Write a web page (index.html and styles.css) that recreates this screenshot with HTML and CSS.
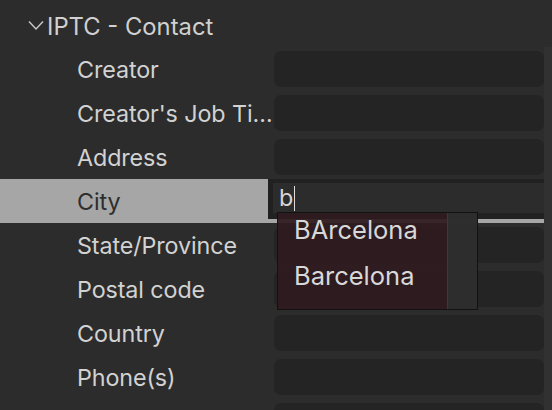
FILE: index.html
```html
<!DOCTYPE html>
<html lang="en">
<head>
  <meta charset="UTF-8">
  <title>IPTC - Contact</title>
  <link rel="stylesheet" href="styles.css">
</head>
<body>

  <div class="panel">
    <div class="section-head">
      <svg class="chevron" width="18" height="12" viewBox="0 0 18 12">
        <polyline points="2,2.5 9,10 16,2.5" fill="none" stroke="#c9c9c9" stroke-width="1.4"/>
      </svg>
      <span>IPTC - Contact</span>
    </div>

    <div class="body">
      <div class="rows">
        <div class="row"><div class="label">Creator</div><div class="field"></div></div>
        <div class="row"><div class="label">Creator's Job Title</div><div class="field"></div></div>
        <div class="row"><div class="label">Address</div><div class="field"></div></div>

        <div class="row editing">
          <div class="label">City</div>
          <div class="editor">
            <div class="editor-input">b<span class="caret"></span></div>
          </div>
          <!-- autocomplete popup -->
          <div class="completions">
            <ul>
              <li>BArcelona</li>
              <li>Barcelona</li>
            </ul>
            <div class="completions-scroll"></div>
          </div>
        </div>

        <div class="row"><div class="label">State/Province</div><div class="field"></div></div>
        <div class="row"><div class="label">Postal code</div><div class="field"></div></div>
        <div class="row"><div class="label">Country</div><div class="field"></div></div>
        <div class="row"><div class="label">Phone(s)</div><div class="field"></div></div>
        <div class="row"><div class="label"></div><div class="field"></div></div>
      </div>
      <div class="scroll-track"></div>
    </div>
  </div>

</body>
</html>
```

FILE: styles.css
```css
html, body {
  margin: 0;
  height: 100%;
  overflow: hidden;
}

body {
  background: #2c2c2c;
  font-family: Inter, "Noto Sans", sans-serif;
  font-size: 23.3px;
  color: #d2d2d2;
}

.panel {
  height: 410px;
  overflow: hidden;
}

/* Section header */
.section-head {
  height: 47px;
  box-sizing: border-box;
  display: flex;
  align-items: center;
  padding: 6px 0 0 27px;
  font-size: 23.8px;
  color: #d0d0d0;
}

.chevron {
  margin-right: 2px;
  margin-top: -4px;
}

.body {
  display: flex;
}

.rows {
  flex: 1;
}

.scroll-track {
  width: 8px;
  background: #313131;
}

/* Rows */
.row {
  position: relative;
  display: grid;
  grid-template-columns: 268px 1fr;
  height: 44px;
  align-items: center;
}

.label {
  padding-left: 77px;
  margin-right: -7px;
  white-space: nowrap;
  overflow: hidden;
  text-overflow: ellipsis;
  letter-spacing: -0.1px;
  padding-top: 1px;
}

.field {
  margin-left: 6px;
  height: 36px;
  border-radius: 7px;
  background: #242424;
}

/* Row being edited */
.row.editing {
  background: #a6a6a6;
}

.row.editing .label {
  color: #2e2e2e;
}

.editor {
  align-self: start;
  height: 40px;
  box-sizing: border-box;
  padding: 4px 0 6px 5px;
  background: #212121;
  position: relative;
}

.editor-input {
  height: 30px;
  background: #2c2c2c;
  padding-left: 6px;
  line-height: 30px;
  color: #d6d6d6;
  display: flex;
  align-items: center;
}

.caret {
  display: inline-block;
  width: 1px;
  height: 25px;
  margin-left: 1px;
  background: #dcdcdc;
}

/* Autocomplete popup */
.completions {
  position: absolute;
  left: 277px;
  top: 33px;
  width: 201px;
  height: 98px;
  box-sizing: border-box;
  border: 1px solid #121212;
  background: rgba(46, 27, 31, 0.93);
  display: flex;
  z-index: 2;
  font-size: 25.5px;
}

.completions ul {
  flex: 1;
  list-style: none;
  margin: 0;
  padding: 0 0 0 16px;
}

.completions li {
  height: 46px;
  line-height: 33px;
  color: #d8d8d8;
}

.completions li + li {
  line-height: 34px;
}

.completions-scroll {
  width: 29px;
  background: rgba(46, 46, 46, 0.95);
  border-left: 1px solid #3a3a3a;
}
```
